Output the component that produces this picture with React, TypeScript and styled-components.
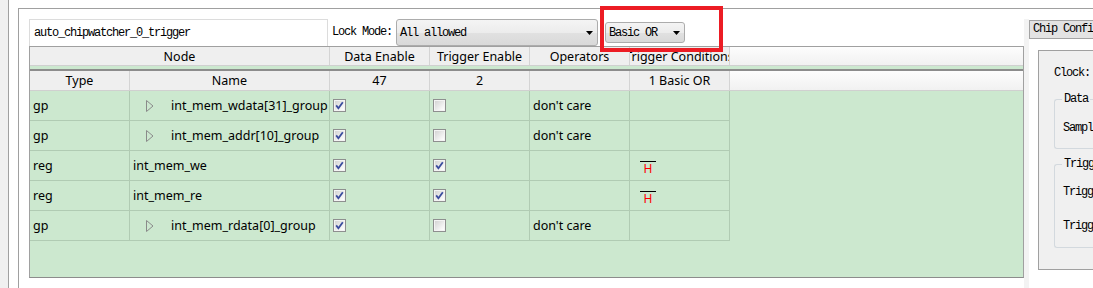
import React, { FC } from 'react';
import styled, { createGlobalStyle } from 'styled-components';

// bitmap-ish look of the SimSun labels: 6px per char
const simFont = `
  font-family: "Liberation Mono", monospace;
  font-size: 12px;
  letter-spacing: -1.2px;
  color: #000;
`;

const GlobalStyle = createGlobalStyle`
  html, body {
    margin: 0;
    padding: 0;
    background: #fff;
    overflow: hidden;
  }
  body {
    font-family: "Noto Sans", "Open Sans", sans-serif;
  }
`;

const Screen = styled.div`
  position: relative;
  display: flex;
  width: 1093px;
  height: 288px;
  overflow: hidden;
`;

const SideStrip = styled.div`
  width: 8px;
  flex-shrink: 0;
  background: #f0f0f0;
  border-right: 1px solid #a0a0a0;
`;

const Frame = styled.div`
  flex: 1;
  min-width: 0;
  display: flex;
  margin: 8px 0 0 9px;
  padding: 10px 0 0 10px;
  border-top: 1px solid #a0a0a0;
  border-left: 1px solid #a0a0a0;
`;

const Editor = styled.div`
  width: 995px;
  height: 259px;
  flex-shrink: 0;
  display: flex;
  flex-direction: column;
`;

const TopBar = styled.div`
  height: 27px;
  display: flex;
  align-items: flex-start;
`;

const NameInput = styled.div`
  ${simFont};
  box-sizing: border-box;
  width: 299px;
  height: 27px;
  padding-left: 4px;
  line-height: 27px;
  border: 1px solid #dcdcdc;
  border-bottom: none;
  background: #fff;
`;

const Label = styled.span`
  ${simFont};
  margin-left: 4px;
  line-height: 27px;
`;

const Combo = styled.div<{ $w: number; $h: number; $ml: number; $mt?: number }>`
  ${simFont};
  box-sizing: border-box;
  width: ${(p) => p.$w}px;
  height: ${(p) => p.$h}px;
  margin-left: ${(p) => p.$ml}px;
  margin-top: ${(p) => p.$mt || 0}px;
  padding: 0 4px 0 3px;
  display: flex;
  align-items: center;
  justify-content: space-between;
  border: 1px solid #acacac;
  border-radius: 3px;
  background: linear-gradient(#f4f4f4, #ececec 50%, #e1e1e1 51%, #d9d9d9);
  white-space: nowrap;
`;

const Table = styled.div`
  flex: 1;
  display: flex;
  flex-direction: column;
  border: 1px solid #a0a0a0;
  border-bottom-color: #8c8c8c;
  background: #cce8cf;
  overflow: hidden;
`;

const HeaderRow = styled.div<{ $h: number }>`
  box-sizing: border-box;
  height: ${(p) => p.$h}px;
  flex-shrink: 0;
  display: flex;
  border-bottom: 1px solid #d0d0d0;
  background: linear-gradient(#fdfdfd, #f1f1f1);
`;

const HeadCell = styled.div<{ $w: number }>`
  box-sizing: border-box;
  width: ${(p) => p.$w}px;
  flex-shrink: 0;
  display: flex;
  align-items: center;
  justify-content: center;
  overflow: hidden;
  white-space: nowrap;
  border-right: 1px solid #d4d4d4;
  background: #efefef;
  font-size: 12.5px;
  color: #000;
`;

const GreenGap = styled.div`
  height: 3px;
  flex-shrink: 0;
`;

const Divider = styled.div`
  height: 2px;
  flex-shrink: 0;
  background: #8c8c8c;
`;

const Row = styled.div`
  display: flex;
  height: 30px;
  flex-shrink: 0;
`;

const Cell = styled.div<{ $w: number; $pl?: number }>`
  box-sizing: border-box;
  width: ${(p) => p.$w}px;
  flex-shrink: 0;
  display: flex;
  align-items: center;
  padding-left: ${(p) => (p.$pl === undefined ? 3 : p.$pl)}px;
  border-right: 1px solid #b0cbb3;
  border-bottom: 1px solid #b0cbb3;
  font-size: 12.5px;
  color: #000;
  white-space: nowrap;
  overflow: hidden;
`;

const NodeName = styled.span<{ $group: boolean }>`
  margin-left: ${(p) => (p.$group ? 17 : 0)}px;
`;

const HighMark = styled.span`
  align-self: flex-start;
  margin: 10px 0 0 10px;
  width: 16px;
  border-top: 1px solid #000;
  text-align: center;
  color: #ff0000;
  font-size: 12px;
  line-height: 13px;
`;

const RightArea = styled.div`
  flex: 1;
  min-width: 0;
  display: flex;
  overflow: hidden;
`;

const Splitter = styled.div`
  width: 5px;
  flex-shrink: 0;
  background: #f3f3f3;
`;

const TabWidget = styled.div`
  flex: 1;
  min-width: 0;
  display: flex;
  flex-direction: column;
`;

const Tab = styled.div`
  ${simFont};
  box-sizing: border-box;
  margin-top: 1px;
  height: 19px;
  padding-left: 3px;
  line-height: 17px;
  border: 1px solid #a3a3a3;
  border-right: none;
  background: #e3e3e3;
  white-space: nowrap;
`;

const Pane = styled.div`
  box-sizing: border-box;
  margin: 11px 0 0 9px;
  height: 220px;
  padding-left: 15px;
  border: 1px solid #a0a0a0;
  border-right: none;
  background: #f0f0f0;
  white-space: nowrap;
`;

const PaneLine = styled.div<{ $mt: number }>`
  ${simFont};
  height: 14px;
  line-height: 14px;
  margin-top: ${(p) => p.$mt}px;
`;

const GroupBox = styled.div<{ $mt: number; $h: number; $pt: number }>`
  position: relative;
  box-sizing: border-box;
  margin-top: ${(p) => p.$mt}px;
  height: ${(p) => p.$h}px;
  padding: ${(p) => p.$pt}px 0 0 8px;
  border: 1px solid #d3d9de;
  border-right: none;
  border-radius: 3px 0 0 3px;
`;

const GroupTitle = styled.span`
  ${simFont};
  position: absolute;
  top: -8px;
  left: 7px;
  padding: 0 2px;
  line-height: 14px;
  background: #f0f0f0;
`;

const Highlight = styled.div`
  position: absolute;
  left: 600px;
  top: 6px;
  width: 123px;
  height: 46px;
  box-sizing: border-box;
  border: 4px solid #ec1c24;
  pointer-events: none;
`;

const Arrow: FC = () => (
  <svg width="7" height="4" viewBox="0 0 7 4">
    <polygon points="0,0 7,0 3.5,4" fill="#000" />
  </svg>
);

const Expander: FC = () => (
  <svg width="8" height="12" viewBox="0 0 8 12">
    <polygon points="0.5,0.5 7,6 0.5,11.5" fill="none" stroke="#8a8a8a" strokeWidth="1" />
  </svg>
);

const CheckBox: FC<{ checked: boolean }> = ({ checked }) => (
  <svg width="13" height="13" viewBox="0 0 13 13">
    <defs>
      <linearGradient id="cbFill" x1="0" y1="0" x2="1" y2="1">
        <stop offset="0" stopColor="#d4d4d4" />
        <stop offset="1" stopColor="#ffffff" />
      </linearGradient>
    </defs>
    <rect x="0.5" y="0.5" width="12" height="12" fill="#f4f4f4" stroke="#8e8f8f" />
    <rect x="2" y="2" width="9" height="9" fill="url(#cbFill)" />
    {checked && (
      <path d="M3.2 6.4 L5.4 9.2 L9.8 3.2" fill="none" stroke="#3a4c9e" strokeWidth="1.8" />
    )}
  </svg>
);

type Node = {
  type: string;
  name: string;
  group: boolean;
  data: boolean;
  trigger: boolean;
  op: string;
  high: boolean;
};

const nodes: Node[] = [
  { type: 'gp', name: 'int_mem_wdata[31]_group', group: true, data: true, trigger: false, op: "don't care", high: false },
  { type: 'gp', name: 'int_mem_addr[10]_group', group: true, data: true, trigger: false, op: "don't care", high: false },
  { type: 'reg', name: 'int_mem_we', group: false, data: true, trigger: true, op: '', high: true },
  { type: 'reg', name: 'int_mem_re', group: false, data: true, trigger: true, op: '', high: true },
  { type: 'gp', name: 'int_mem_rdata[0]_group', group: true, data: true, trigger: false, op: "don't care", high: false },
];

const App: FC = () => (
  <>
    <GlobalStyle />
    <Screen>
      <SideStrip />
      <Frame>
        <Editor>
          <TopBar>
            <NameInput>auto_chipwatcher_0_trigger</NameInput>
            <Label>Lock Mode:</Label>
            <Combo $w={202} $h={27} $ml={4}>
              <span>All allowed</span>
              <Arrow />
            </Combo>
            <Combo $w={80} $h={21} $ml={7} $mt={3}>
              <span>Basic OR</span>
              <Arrow />
            </Combo>
          </TopBar>
          <Table>
            <HeaderRow $h={19}>
              <HeadCell $w={300}>Node</HeadCell>
              <HeadCell $w={100}>Data Enable</HeadCell>
              <HeadCell $w={100}>Trigger Enable</HeadCell>
              <HeadCell $w={100}>Operators</HeadCell>
              <HeadCell $w={100}>Trigger Conditions</HeadCell>
            </HeaderRow>
            <GreenGap />
            <Divider />
            <HeaderRow $h={20}>
              <HeadCell $w={100}>Type</HeadCell>
              <HeadCell $w={200}>Name</HeadCell>
              <HeadCell $w={100}>47</HeadCell>
              <HeadCell $w={100}>2</HeadCell>
              <HeadCell $w={100}></HeadCell>
              <HeadCell $w={100}>1 Basic OR</HeadCell>
            </HeaderRow>
            {nodes.map((n) => (
              <Row key={n.name}>
                <Cell $w={100}>{n.type}</Cell>
                <Cell $w={200} $pl={n.group ? 16 : 3}>
                  {n.group && <Expander />}
                  <NodeName $group={n.group}>{n.name}</NodeName>
                </Cell>
                <Cell $w={100}>
                  <CheckBox checked={n.data} />
                </Cell>
                <Cell $w={100}>
                  <CheckBox checked={n.trigger} />
                </Cell>
                <Cell $w={100}>{n.op}</Cell>
                <Cell $w={100} $pl={0}>
                  {n.high && <HighMark>H</HighMark>}
                </Cell>
              </Row>
            ))}
          </Table>
        </Editor>
        <RightArea>
          <Splitter />
          <TabWidget>
            <Tab>Chip Configuration</Tab>
            <Pane>
              <PaneLine $mt={15}>Clock:</PaneLine>
              <GroupBox $mt={19} $h={50} $pt={21}>
                <GroupTitle>Data</GroupTitle>
                <PaneLine $mt={0}>Sample Depth:</PaneLine>
              </GroupBox>
              <GroupBox $mt={15} $h={84} $pt={20}>
                <GroupTitle>Trigger Setting</GroupTitle>
                <PaneLine $mt={0}>Trigger Mode:</PaneLine>
                <PaneLine $mt={20}>Trigger Position:</PaneLine>
              </GroupBox>
            </Pane>
          </TabWidget>
        </RightArea>
      </Frame>
      <Highlight />
    </Screen>
  </>
);

export default App;
